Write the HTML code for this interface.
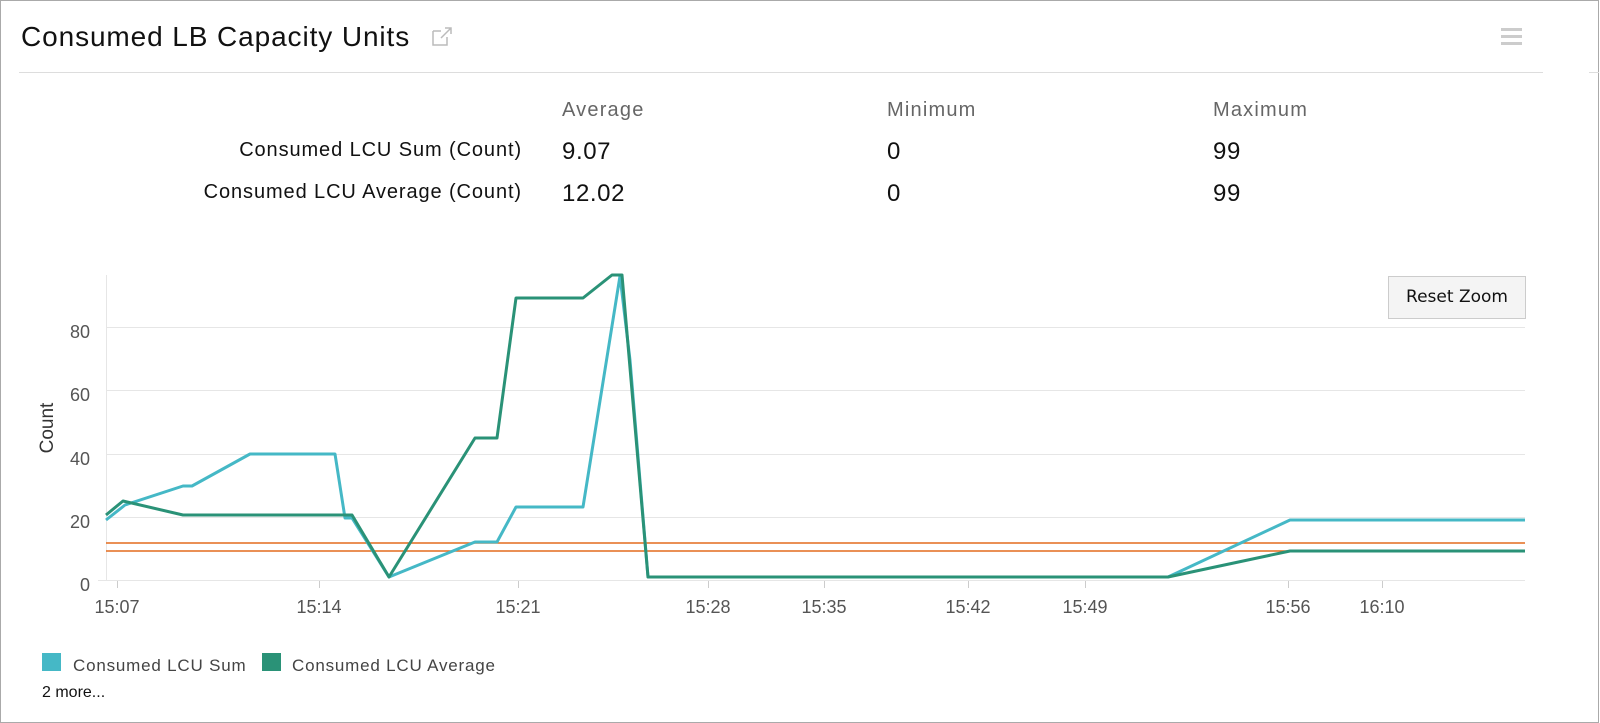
<!DOCTYPE html>
<html><head><style>
body{margin:0;width:1600px;height:723px;background:#fff;font-family:"Liberation Sans",sans-serif;position:relative;overflow:hidden}
.b{position:absolute;left:0;top:0;width:1597px;height:721px;border:1px solid #aaa;box-sizing:content-box}
.t{position:absolute;left:21px;top:21px;font-size:28px;letter-spacing:0.9px;color:#111}
.hr{position:absolute;left:19px;top:72px;width:1524px;height:1px;background:#ddd}
.hr2{position:absolute;left:1589px;top:72px;width:10px;height:1px;background:#ddd}
.h{position:absolute;top:99px;font-size:20px;letter-spacing:1.2px;color:#666}
.l{position:absolute;right:1078px;font-size:20px;letter-spacing:0.9px;color:#111;white-space:nowrap}
.v{position:absolute;font-size:24px;letter-spacing:0.6px;color:#111}
.btn{position:absolute;left:1388px;top:276px;width:136px;height:41px;background:#f4f4f4;border:1px solid #ccc;font-family:"DejaVu Sans",sans-serif;font-size:17px;line-height:41px;text-align:center;color:#111}
</style></head><body>
<div class="b"></div>
<div class="t">Consumed LB Capacity Units</div>
<svg style="position:absolute;left:432px;top:27px" width="22" height="20"><path d="M1 4H9M1 4V18H15V10" fill="none" stroke="#bbb" stroke-width="1.5"/><path d="M9 11L19 1M13 1H19V7" fill="none" stroke="#bbb" stroke-width="1.5"/></svg>
<svg style="position:absolute;left:1500px;top:27px" width="24" height="20"><rect x="1" y="1" width="21" height="3" fill="#ccc"/><rect x="1" y="8" width="21" height="3" fill="#ccc"/><rect x="1" y="15" width="21" height="3" fill="#ccc"/></svg>
<div class="hr"></div><div class="hr2"></div>
<div class="h" style="left:562px">Average</div>
<div class="h" style="left:887px">Minimum</div>
<div class="h" style="left:1213px">Maximum</div>
<div class="l" style="top:139px">Consumed LCU Sum (Count)</div>
<div class="l" style="top:181px">Consumed LCU Average (Count)</div>
<div class="v" style="left:562px;top:138px">9.07</div>
<div class="v" style="left:887px;top:138px">0</div>
<div class="v" style="left:1213px;top:138px">99</div>
<div class="v" style="left:562px;top:180px">12.02</div>
<div class="v" style="left:887px;top:180px">0</div>
<div class="v" style="left:1213px;top:180px">99</div>
<svg style="position:absolute;left:0;top:0" width="1600" height="723" font-family="Liberation Sans,sans-serif">
<g stroke="#e6e6e6" stroke-width="1">
<line x1="106" y1="327.5" x2="1525" y2="327.5"/><line x1="106" y1="390.5" x2="1525" y2="390.5"/><line x1="106" y1="454.5" x2="1525" y2="454.5"/><line x1="106" y1="517.5" x2="1525" y2="517.5"/>
<line x1="106.5" y1="275" x2="106.5" y2="581"/><line x1="98" y1="580.5" x2="1525" y2="580.5"/>
<g stroke="#ccc"><line x1="117.5" y1="581" x2="117.5" y2="588"/><line x1="319.5" y1="581" x2="319.5" y2="588"/><line x1="518.5" y1="581" x2="518.5" y2="588"/><line x1="708.5" y1="581" x2="708.5" y2="588"/><line x1="824.5" y1="581" x2="824.5" y2="588"/><line x1="968.5" y1="581" x2="968.5" y2="588"/><line x1="1085.5" y1="581" x2="1085.5" y2="588"/><line x1="1288.5" y1="581" x2="1288.5" y2="588"/><line x1="1382.5" y1="581" x2="1382.5" y2="588"/></g>
</g>
<g font-size="18" fill="#555" text-anchor="end">
<text x="90" y="338">80</text><text x="90" y="401">60</text><text x="90" y="465">40</text><text x="90" y="528">20</text><text x="90" y="591">0</text>
</g>
<g font-size="18" fill="#555" text-anchor="middle">
<text x="117" y="613">15:07</text><text x="319" y="613">15:14</text><text x="518" y="613">15:21</text><text x="708" y="613">15:28</text><text x="824" y="613">15:35</text><text x="968" y="613">15:42</text><text x="1085" y="613">15:49</text><text x="1288" y="613">15:56</text><text x="1382" y="613">16:10</text>
</g>
<text x="53" y="428" font-size="19" fill="#333" text-anchor="middle" transform="rotate(-90 53 428)">Count</text>
<line x1="106" y1="543" x2="1525" y2="543" stroke="#e46b1f" stroke-width="1.5"/>
<line x1="106" y1="551" x2="1525" y2="551" stroke="#e46b1f" stroke-width="1.5"/>
<polyline fill="none" stroke="#45b8c6" stroke-width="3" stroke-linejoin="round" points="106,520 125,505 183,486 192,486 250,454 335,454 345,518 352,518 389,577 475,542 497,542 516,507 583,507 620,276 630,360 648,577 1168,577 1290,520 1525,520"/>
<polyline fill="none" stroke="#2a9277" stroke-width="3" stroke-linejoin="round" points="106,515 123,501 183,515 352,515 389,577 475,438 497,438 516,298 583,298 612,275 622,275 648,577 780,577 1168,577 1290,551 1525,551"/>
<rect x="42" y="653" width="19" height="18" fill="#45b8c6"/>
<text x="73" y="671" font-size="17" letter-spacing="0.8" fill="#444">Consumed LCU Sum</text>
<rect x="262" y="653" width="19" height="18" fill="#2a9277"/>
<text x="292" y="671" font-size="17" letter-spacing="0.8" fill="#444">Consumed LCU Average</text>
<text x="42" y="697" font-size="16" fill="#111">2 more...</text>
</svg>
<div class="btn">Reset Zoom</div>
</body></html>
